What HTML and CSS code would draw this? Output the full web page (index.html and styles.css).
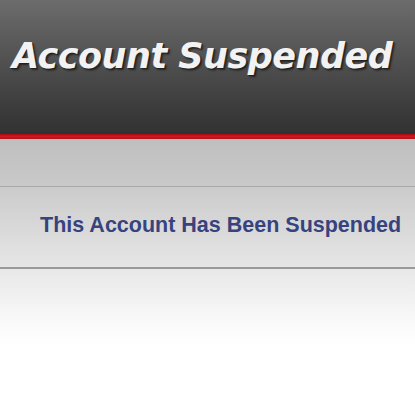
FILE: index.html
```html
<!DOCTYPE html>
<html lang="en">
<head>
    <meta charset="UTF-8">
    <meta name="viewport" content="width=device-width, initial-scale=1.0">
    <title>Account Suspended</title>
    <link rel="stylesheet" href="styles.css">
</head>
<body>
    <div class="header">
        <h1>Account Suspended</h1>
    </div>
    <div class="redline"></div>
    <div class="band"></div>
    <div class="message">
        <h2>This Account Has Been Suspended</h2>
    </div>
    <div class="footer"></div>
</body>
</html>
```

FILE: styles.css
```css
body {
    margin: 0;
    height: 400px;
    overflow: hidden;
    font-family: "Liberation Sans", Arial, sans-serif;
    background-color: #fff;
}

.header {
    height: 134px;
    background: linear-gradient(#6c6c6c, #3a3a3a 85%, #333 100%);
    border-bottom: 2px solid #2c3331;
    box-sizing: border-box;
    padding: 36px 0 0 12px;
}

.header h1 {
    margin: 0;
    font-family: "DejaVu Sans", Verdana, sans-serif;
    font-weight: bold;
    font-style: italic;
    font-size: 35px;
    line-height: 40px;
    color: #f2f2f2;
    letter-spacing: -0.5px;
    text-shadow: 1px 1px 0 #222, -1px 0 0 #555, 2px 2px 2px rgba(0, 0, 0, 0.5);
}

.redline {
    height: 5px;
    background: linear-gradient(#a00e14, #d0161d 50%, #b3141a);
}

.band {
    height: 47px;
    background: linear-gradient(#bfbfbf, #c9c9c9);
    border-bottom: 1px solid #a9a9a9;
}

.message {
    height: 82px;
    box-sizing: border-box;
    background: linear-gradient(#cbcbcb, #e6e6e6);
    border-bottom: 2px solid #9a9a9a;
    padding-top: 26px;
    padding-left: 40px;
}

.message h2 {
    margin: 0;
    font-size: 21.5px;
    line-height: 25px;
    font-weight: bold;
    color: #37437e;
}

.footer {
    height: 131px;
    background: linear-gradient(#e8e8e8, #fbfbfb 45%, #fff 60%);
}
```
